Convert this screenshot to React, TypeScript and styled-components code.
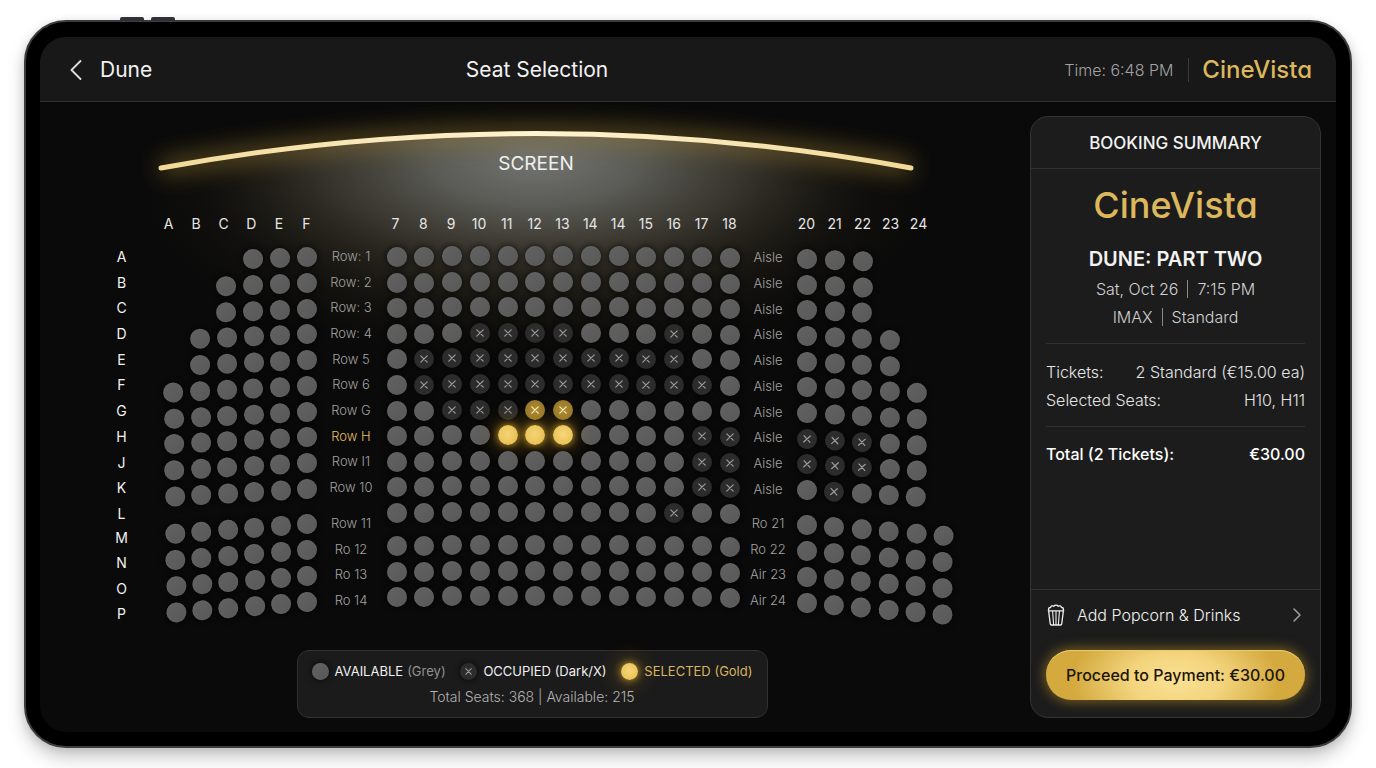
import React from "react";
import styled, { createGlobalStyle, css } from "styled-components";

const GlobalStyle = createGlobalStyle`
  *, *::before, *::after { box-sizing: border-box; }
  body {
    margin: 0;
    background: #fff;
    color: #f2f2f2;
    font-family: Inter, "Liberation Sans", sans-serif;
    -webkit-font-smoothing: antialiased;
  }
  button { font: inherit; color: inherit; border: 0; padding: 0; background: none; cursor: pointer; }
  h1, h2, h3, p, dl, dd, dt { margin: 0; font-weight: inherit; }
`;

const GOLD = "#dcb75c";

const Page = styled.div`
  min-height: 100vh;
  padding: 20px 24px;
  display: flex;
  flex-direction: column;
`;

const Tablet = styled.div`
  position: relative;
  flex: 1;
  display: flex;
  flex-direction: column;
  padding: 15px 14px 14px;
  border: 2px solid #3b3d3e;
  border-radius: 42px;
  background: #000;
  box-shadow: 0 10px 18px rgba(0, 0, 0, 0.2), 0 2px 10px rgba(0, 0, 0, 0.12);
`;

const SideKeys = styled.div`
  position: absolute;
  top: -5px;
  left: 94px;
  display: flex;
  gap: 7px;
  span {
    width: 24px;
    height: 4px;
    border-radius: 2px 2px 0 0;
    background: #303137;
  }
`;

const Display = styled.div`
  flex: 1;
  display: flex;
  flex-direction: column;
  overflow: hidden;
  border-radius: 26px;
  background: #0a0a0a;
`;

const Header = styled.header`
  display: grid;
  grid-template-columns: minmax(0, 1fr) 302px;
  align-items: center;
  height: 65px;
  padding-top: 1px;
  border-bottom: 1px solid #2f2f2f;
  background: #181818;
`;

const HeaderMain = styled.div`
  display: grid;
  grid-template-columns: 1fr auto 1fr;
  align-items: center;
  padding: 0 30px;
  font-size: 21px;
  line-height: 28px;
`;

const BackButton = styled.button`
  justify-self: start;
  display: flex;
  align-items: center;
  gap: 18px;
`;

const HeaderTitle = styled.h1`
  font-size: 21px;
  line-height: 28px;
`;

const HeaderAside = styled.div`
  display: flex;
  align-items: center;
  justify-content: flex-end;
  padding-right: 24px;
`;

const Clock = styled.span`
  padding-right: 15px;
  margin-right: 13px;
  border-right: 1px solid #3a3a3a;
  font-size: 16px;
  line-height: 24px;
  font-weight: 300;
  color: #a3a3a3;
`;

const Brand = styled.span<{ $large?: boolean }>`
  font-feature-settings: "cv11" 1;
  font-weight: 450;
  font-size: ${(p) => (p.$large ? 36 : 24)}px;
  line-height: ${(p) => (p.$large ? 44 : 28)}px;
  color: ${GOLD};
`;

const Body = styled.div`
  flex: 1;
  display: grid;
  grid-template-columns: minmax(0, 1fr) 291px;
  gap: 6px;
  padding: 14px 15px 14px 0;
`;

/* ---------- auditorium ---------- */

const Stage = styled.main`
  display: flex;
  flex-direction: column;
  align-items: center;
`;

const ScreenArea = styled.div`
  position: relative;
  width: 984px;
  height: 98px;
  padding-top: 36px;
  padding-left: 8px;
  text-align: center;
`;

const ScreenArt = styled.svg`
  position: absolute;
  top: -14px;
  left: 0;
  pointer-events: none;
`;

const ScreenLabel = styled.span`
  position: relative;
  font-size: 19px;
  line-height: 24px;
  color: #f0f0ee;
`;

const Plan = styled.div`
  position: relative;
  display: grid;
  grid-template-columns: 47px 158px 69px 354px 57px 156px;
`;

const Block = styled.div<{ $drop?: number; $align?: string }>`
  display: flex;
  flex-direction: column;
  align-items: ${(p) => p.$align ?? "flex-start"};
  padding-top: ${(p) => p.$drop ?? 0}px;
`;

const ColumnHeads = styled.div<{ $width: number; $lift?: number }>`
  align-self: flex-start;
  display: flex;
  justify-content: space-between;
  width: ${(p) => p.$width}px;
  height: 20px;
  margin-top: ${(p) => -(p.$lift ?? 0)}px;
  margin-bottom: ${(p) => 12 + (p.$lift ?? 0)}px;
  span {
    width: 20px;
    display: flex;
    justify-content: center;
    font-size: 14px;
    line-height: 20px;
    color: #e6e6e6;
  }
`;

const HeadSpacer = styled.div`
  height: 32px;
`;

const Bank = styled.div<{ $height: number; $gap?: number; $align?: string }>`
  display: flex;
  flex-direction: column;
  justify-content: space-between;
  align-items: ${(p) => p.$align ?? "center"};
  height: ${(p) => p.$height}px;
  margin-top: ${(p) => p.$gap ?? 0}px;
`;

const RowLetter = styled.span`
  width: 20px;
  text-align: center;
  font-size: 14px;
  line-height: 20px;
  color: #f2f2f2;
`;

const RowName = styled.span<{ $active?: boolean }>`
  font-size: 13px;
  line-height: 20px;
  font-weight: 300;
  color: ${(p) => (p.$active ? "#e6bf62" : "#a2a2a2")};
`;

const SeatRow = styled.div<{ $width: number; $tilt: number; $origin: string }>`
  display: flex;
  justify-content: space-between;
  width: ${(p) => p.$width}px;
  height: 20px;
  transform: rotate(${(p) => p.$tilt}deg);
  transform-origin: ${(p) => p.$origin};
`;

type Kind = "free" | "taken" | "picked" | "held";

const seatSkin = {
  free: css`
    background: linear-gradient(135deg, #626262, #585858);
    box-shadow: inset 0 0 1px 1px rgba(255, 255, 255, 0.03), 0 0 5px 2px rgba(0, 0, 0, 0.4);
  `,
  taken: css`
    background: #2c2c2c;
    color: #9c9c9c;
    box-shadow: 0 0 5px 2px rgba(0, 0, 0, 0.4);
  `,
  picked: css`
    background: radial-gradient(circle at 50% 45%, #f6d778, #e6bb4c);
    box-shadow: 0 0 7px 1px rgba(226, 172, 44, 0.65), 0 0 20px 5px rgba(190, 138, 30, 0.3);
  `,
  held: css`
    background: radial-gradient(circle, #b08d34, #8d7029);
    color: #fff0bd;
  `,
};

const SeatShape = styled.button<{ $kind: Kind; $sag?: number }>`
  position: relative;
  flex: none;
  display: flex;
  align-items: center;
  justify-content: center;
  width: 20px;
  height: 20px;
  border-radius: 50%;
  transform: translateY(${(p) => p.$sag ?? 0}px);
  ${(p) => seatSkin[p.$kind]}
  z-index: ${(p) => (p.$kind === "picked" ? 1 : 0)};
`;

/* ---------- legend ---------- */

const Legend = styled.section`
  margin-top: auto;
  width: 471px;
  height: 68px;
  padding: 9px 14px;
  border: 1px solid #303030;
  border-radius: 12px;
  background: #1b1b1b;
`;

const LegendKeys = styled.div`
  display: flex;
  justify-content: space-between;
  font-size: 13px;
  line-height: 22px;
`;

const LegendItem = styled.span<{ $gold?: boolean }>`
  display: flex;
  align-items: center;
  gap: 6px;
  color: ${(p) => (p.$gold ? "#d8b45f" : "#f0f0f0")};
  small { margin-left: -2px; font-size: 13px; color: #929292; }
`;

const Swatch = styled.i<{ $kind: Kind }>`
  display: flex;
  align-items: center;
  justify-content: center;
  width: 17px;
  height: 17px;
  border-radius: 50%;
  ${(p) => seatSkin[p.$kind]}
`;

const LegendTotals = styled.p`
  padding-top: 5px;
  text-align: center;
  font-size: 14px;
  line-height: 20px;
  font-weight: 300;
  color: #b4b4b4;
`;

/* ---------- booking summary ---------- */

const Panel = styled.aside`
  display: flex;
  flex-direction: column;
  border: 1px solid #343434;
  border-radius: 18px;
  background: #1c1c1c;
`;

const PanelTitle = styled.h2`
  height: 52px;
  border-bottom: 1px solid #303030;
  text-align: center;
  font-size: 17px;
  line-height: 52px;
  font-weight: 500;
`;

const Film = styled.div`
  display: flex;
  flex-direction: column;
  align-items: center;
  padding-top: 14px;
`;

const FilmTitle = styled.h3`
  margin: 18px 0 2px;
  font-size: 20px;
  line-height: 28px;
  font-weight: 600;
`;

const FilmMeta = styled.p`
  display: flex;
  align-items: center;
  font-size: 16px;
  line-height: 28px;
  font-weight: 300;
  color: #d2d2d2;
  span + span {
    margin-left: 9px;
    padding-left: 9px;
    border-left: 1px solid #8a8a8a;
    line-height: 18px;
  }
`;

const Lines = styled.dl`
  margin: 12px 15px 0;
  padding: 14px 0 12px;
  border-top: 1px solid #303030;
  border-bottom: 1px solid #303030;
`;

const Line = styled.div<{ $strong?: boolean }>`
  display: flex;
  justify-content: space-between;
  font-size: 16px;
  line-height: 28px;
  font-weight: ${(p) => (p.$strong ? 550 : 300)};
  color: ${(p) => (p.$strong ? "#fff" : "#e6e6e6")};
`;

const Total = styled.dl`
  margin: 13px 15px 0;
`;

const PanelFoot = styled.div`
  margin-top: auto;
  padding: 0 15px 17px;
  border-top: 1px solid #323232;
`;

const ExtrasButton = styled.button`
  display: grid;
  grid-template-columns: 18px 1fr auto;
  align-items: center;
  gap: 12px;
  width: 100%;
  height: 50px;
  margin-bottom: 10px;
  padding: 0 4px 0 1px;
  text-align: left;
  font-size: 16px;
  font-weight: 300;
  color: #f2f2f2;
`;

const PayButton = styled.button`
  display: block;
  width: 100%;
  height: 50px;
  border-radius: 25px;
  background: radial-gradient(ellipse 40% 120% at 50% 60%, #fbe195 0%, #f3d47d 45%, #d4aa3f 100%);
  box-shadow: 0 0 12px 2px rgba(205, 158, 40, 0.5), inset 0 1px 0 #edcb6b;
  font-size: 16px;
  font-weight: 550;
  color: #1c1405;
`;

const Cross = ({ size = 8 }: { size?: number }) => (
  <svg width={size} height={size} viewBox="0 0 8 8" fill="none" stroke="currentColor" strokeWidth="1.200" strokeLinecap="round" aria-hidden>
    <path d="M.8.8 7.2 7.2M7.2.8.8 7.2" />
  </svg>
);

const PopcornIcon = () => (
  <svg width="18" height="22" viewBox="0 0 18 22" fill="none" stroke="#f0f0f0" strokeWidth="1.3" strokeLinejoin="round" strokeLinecap="round" aria-hidden>
    <path d="M2 6.2C1 5.400 1.600 3.300 3.500 3.500 3.800 1.900 5.700 1.300 6.800 2.300 7.700.8 10.300.8 11.200 2.300 12.400 1.300 14.200 1.900 14.500 3.500 16.400 3.300 17 5.400 16 6.200" />
    <path d="M1.300 6.800h15.400M1.600 6.800 3.300 20q.1 1 1.100 1h9.200q1 0 1.100-1L16.400 6.800" />
    <path d="M5.600 7.200 6.600 20.500M12.400 7.200 11.400 20.500M9 7.200v13.300" strokeWidth="1.100" />
  </svg>
);

const Chevron = ({ dir, w, h }: { dir: "left" | "right"; w: number; h: number }) => (
  <svg width={w} height={h} viewBox="0 0 12 20" fill="none" stroke={dir === "left" ? "#dedede" : "#a0a0a0"} strokeWidth={dir === "left" ? 1.8 : 2.2} strokeLinecap="round" strokeLinejoin="round" aria-hidden>
    <path d={dir === "left" ? "M10.500 1 1.500 10l9 9" : "M1.500 1l9 9-9 9"} />
  </svg>
);

const ScreenDrawing = () => (
  <ScreenArt width="984" height="260" viewBox="0 0 984 260" aria-hidden>
    <defs>
      <radialGradient id="beam" cx="496" cy="60" r="350" gradientUnits="userSpaceOnUse" gradientTransform="translate(0 34) scale(1 .42)">
        <stop offset="0" stopColor="#727470" />
        <stop offset=".3" stopColor="#60615c" stopOpacity=".9" />
        <stop offset=".6" stopColor="#45423a" stopOpacity=".65" />
        <stop offset="1" stopColor="#1c1910" stopOpacity="0" />
      </radialGradient>
      <radialGradient id="haze" cx="496" cy="100" r="400" gradientUnits="userSpaceOnUse" gradientTransform="translate(0 60) scale(1 .4)">
        <stop offset="0" stopColor="#3a372d" stopOpacity=".8" />
        <stop offset=".6" stopColor="#26231a" stopOpacity=".6" />
        <stop offset="1" stopColor="#15130d" stopOpacity="0" />
      </radialGradient>
      <linearGradient id="beamLine" x1="120" x2="872" y1="0" y2="0" gradientUnits="userSpaceOnUse">
        <stop offset="0" stopColor="#f2d999" />
        <stop offset=".5" stopColor="#fff3d2" />
        <stop offset="1" stopColor="#f2d999" />
      </linearGradient>
      <clipPath id="below">
        <path d="M60 78 121 66Q496-3 871 66L940 78V260H60Z" />
      </clipPath>
      <filter id="soft" x="60" y="-40" width="880" height="180" filterUnits="userSpaceOnUse">
        <feGaussianBlur stdDeviation="11" />
      </filter>
    </defs>
    <g clipPath="url(#below)">
      <rect width="984" height="260" fill="url(#haze)" />
      <rect width="984" height="260" fill="url(#beam)" />
    </g>
    <path d="M121 66Q496-3 871 66" fill="none" stroke="#a3822f" strokeWidth="16" strokeOpacity=".55" filter="url(#soft)" />
    <path d="M121 66Q496-3 871 66" fill="none" stroke="url(#beamLine)" strokeWidth="5" strokeLinecap="round" />
  </ScreenArt>
);

/* "." free, "x" occupied, "o" selected, "h" held */
const KINDS: Record<string, Kind> = { ".": "free", x: "taken", o: "picked", h: "held" };

const LETTERS_FRONT = "ABCDEFGHJKL".split("");
const LETTERS_BACK = "MNOP".split("");

const LEFT = ["...", "....", "....", ".....", ".....", "......", "......", "......", "......", "......", "......", "......", "......", "......"];
const CENTER = [
  ".............", ".............", ".............", "...xxxx...x..", ".xxxxxxxxxx..", ".xxxxxxxxxxx.", "..xxxhh......",
  "....ooo....xx", "...........xx", "...........xx", "..........x..", ".............", ".............", ".............",
];
const RIGHT = ["...", "...", "...", "....", "....", ".....", ".....", "xxx..", "xxx..", ".x...", "......", "......", "......", "......"];

const ROW_NAMES = ["Row: 1", "Row: 2", "Row: 3", "Row: 4", "Row 5", "Row 6", "Row G", "Row H", "Row I1", "Row 10", "Row 11", "Ro 12", "Ro 13", "Ro 14"];
const AISLE_NAMES = [...Array(10).fill("Aisle"), "Ro 21", "Ro 22", "Air 23", "Air 24"];

const LEFT_HEADS = "ABCDEF".split("");
const CENTER_HEADS = ["7", "8", "9", "10", "11", "12", "13", "14", "14", "15", "16", "17", "18"];
const RIGHT_HEADS = ["20", "21", "22", "23", "24"];

const tilt = (row: number) => (row < 10 ? 2.1 + row * 0.13 : 4.2 + (row - 10) * 0.12);
const sag = (col: number) => Math.round(((col - 5) / 5) ** 2 * 0.9);

const Seat = ({ mark, name, drop }: { mark: string; name: string; drop?: number }) => (
  <SeatShape type="button" $kind={KINDS[mark]} $sag={drop} disabled={mark === "x"} aria-pressed={mark === "o"} aria-label={name}>
    {(mark === "x" || mark === "h") && <Cross />}
  </SeatShape>
);

type Side = "left" | "center" | "right";

const rowShape = (side: Side, row: number, count: number) => {
  if (side === "center") return { $width: 353, $tilt: 0, $origin: "center" };
  const pitch = side === "left" ? 27 - row * 0.06 : 27.8 - row * 0.05;
  const $width = Math.round((count - 1) * pitch) + 20;
  return side === "left"
    ? { $width, $tilt: -tilt(row), $origin: "calc(100% - 10px) 50%" }
    : { $width, $tilt: tilt(row) + 0.3, $origin: "10px 50%" };
};

const SeatRows = ({ rows, from, side }: { rows: string[]; from: number; side: Side }) => (
  <>
    {rows.map((row, i) => (
      <SeatRow key={i} {...rowShape(side, from + i, row.length)}>
        {row.split("").map((mark, c) => (
          <Seat key={c} mark={mark} name={`${side} row ${from + i + 1}, seat ${c + 1}`} drop={side === "center" ? sag(c) : 0} />
        ))}
      </SeatRow>
    ))}
  </>
);

const Heads = ({ names, width, lift }: { names: string[]; width: number; lift?: number }) => (
  <ColumnHeads $width={width} $lift={lift}>
    {names.map((n, i) => <span key={i}>{n}</span>)}
  </ColumnHeads>
);

const SeatPlan = () => (
  <Plan>
    <Block $drop={1}>
      <HeadSpacer />
      <Bank $height={277}>{LETTERS_FRONT.map((l) => <RowLetter key={l}>{l}</RowLetter>)}</Bank>
      <Bank $height={96} $gap={4}>{LETTERS_BACK.map((l) => <RowLetter key={l}>{l}</RowLetter>)}</Bank>
    </Block>
    <Block $drop={1} $align="flex-end">
      <Heads names={LEFT_HEADS} width={158} lift={1} />
      <Bank $height={252} $align="flex-end"><SeatRows rows={LEFT.slice(0, 10)} from={0} side="left" /></Bank>
      <Bank $height={98} $gap={15} $align="flex-end"><SeatRows rows={LEFT.slice(10)} from={10} side="left" /></Bank>
    </Block>
    <Block $align="center">
      <HeadSpacer />
      <Bank $height={251}>{ROW_NAMES.slice(0, 10).map((n) => <RowName key={n} $active={n === "Row H"}>{n}</RowName>)}</Bank>
      <Bank $height={97} $gap={16}>{ROW_NAMES.slice(10).map((n) => <RowName key={n}>{n}</RowName>)}</Bank>
    </Block>
    <Block $align="flex-end">
      <Heads names={CENTER_HEADS} width={354} />
      <Bank $height={276}><SeatRows rows={CENTER.slice(0, 11)} from={0} side="center" /></Bank>
      <Bank $height={71} $gap={13}><SeatRows rows={CENTER.slice(11)} from={11} side="center" /></Bank>
    </Block>
    <Block $drop={1} $align="center">
      <HeadSpacer />
      <Bank $height={252}>{AISLE_NAMES.slice(0, 10).map((n, i) => <RowName key={i}>{n}</RowName>)}</Bank>
      <Bank $height={97} $gap={14}>{AISLE_NAMES.slice(10).map((n) => <RowName key={n}>{n}</RowName>)}</Bank>
    </Block>
    <Block $drop={3}>
      <Heads names={RIGHT_HEADS} width={132} lift={3} />
      <Bank $height={251} $align="flex-start"><SeatRows rows={RIGHT.slice(0, 10)} from={0} side="right" /></Bank>
      <Bank $height={98} $gap={15} $align="flex-start"><SeatRows rows={RIGHT.slice(10)} from={10} side="right" /></Bank>
    </Block>
  </Plan>
);

export default function App() {
  return (
    <>
      <GlobalStyle />
      <Page>
        <Tablet>
          <SideKeys><span /><span /></SideKeys>
          <Display>
            <Header>
              <HeaderMain>
                <BackButton type="button"><Chevron dir="left" w={12} h={20} />Dune</BackButton>
                <HeaderTitle>Seat Selection</HeaderTitle>
              </HeaderMain>
              <HeaderAside>
                <Clock>Time: 6:48 PM</Clock>
                <Brand>CineVista</Brand>
              </HeaderAside>
            </Header>
            <Body>
              <Stage>
                <ScreenArea>
                  <ScreenDrawing />
                  <ScreenLabel>SCREEN</ScreenLabel>
                </ScreenArea>
                <SeatPlan />
                <Legend>
                  <LegendKeys>
                    <LegendItem><Swatch $kind="free" />AVAILABLE <small>(Grey)</small></LegendItem>
                    <LegendItem><Swatch $kind="taken"><Cross size={7} /></Swatch>OCCUPIED (Dark/X)</LegendItem>
                    <LegendItem $gold><Swatch $kind="picked" />SELECTED (Gold)</LegendItem>
                  </LegendKeys>
                  <LegendTotals>Total Seats: 368 | Available: 215</LegendTotals>
                </Legend>
              </Stage>
              <Panel>
                <PanelTitle>BOOKING SUMMARY</PanelTitle>
                <Film>
                  <Brand $large>CineVista</Brand>
                  <FilmTitle>DUNE: PART TWO</FilmTitle>
                  <FilmMeta><span>Sat, Oct 26</span><span>7:15 PM</span></FilmMeta>
                  <FilmMeta><span>IMAX</span><span>Standard</span></FilmMeta>
                </Film>
                <Lines>
                  <Line><dt>Tickets:</dt><dd>2 Standard (€15.00 ea)</dd></Line>
                  <Line><dt>Selected Seats:</dt><dd>H10, H11</dd></Line>
                </Lines>
                <Total>
                  <Line $strong><dt>Total (2 Tickets):</dt><dd>€30.00</dd></Line>
                </Total>
                <PanelFoot>
                  <ExtrasButton type="button"><PopcornIcon />Add Popcorn &amp; Drinks<Chevron dir="right" w={8} h={14} /></ExtrasButton>
                  <PayButton type="button">Proceed to Payment: €30.00</PayButton>
                </PanelFoot>
              </Panel>
            </Body>
          </Display>
        </Tablet>
      </Page>
    </>
  );
}
